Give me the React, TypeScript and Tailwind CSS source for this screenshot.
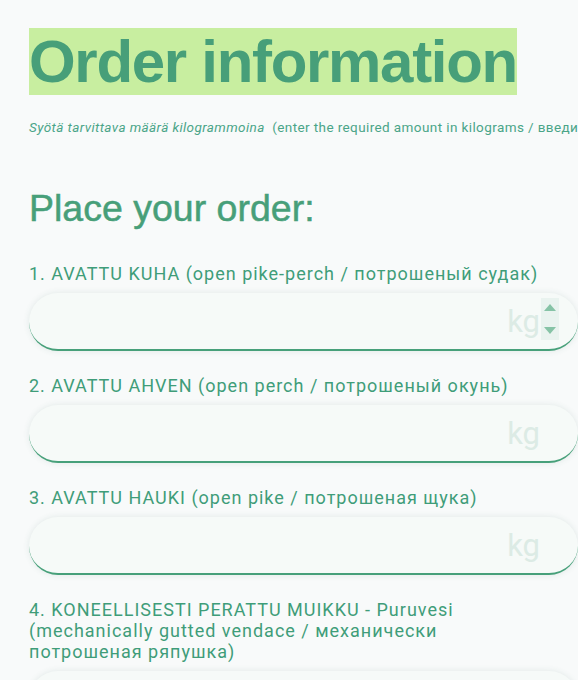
import { useState } from "react";

type Item = { id: number; label: string; spinner?: boolean };

const items: Item[] = [
  { id: 1, label: "1. AVATTU KUHA (open pike-perch / потрошеный судак)", spinner: true },
  { id: 2, label: "2. AVATTU AHVEN (open perch / потрошеный окунь)" },
  { id: 3, label: "3. AVATTU HAUKI (open pike / потрошеная щука)" },
  {
    id: 4,
    label:
      "4. KONEELLISESTI PERATTU MUIKKU - Puruvesi (mechanically gutted vendace / механически потрошеная ряпушка)",
  },
];

function Spinner() {
  return (
    <div className="pointer-events-none absolute right-[19px] top-[5px] flex h-[42px] w-[18px] flex-col items-center justify-between bg-[#e9f3ef] py-[6px]">
      <svg width="12" height="7" viewBox="0 0 12 7">
        <path d="M6 0 L12 7 L0 7 Z" fill="#86c3a6" />
      </svg>
      <svg width="12" height="7" viewBox="0 0 12 7">
        <path d="M0 0 L12 0 L6 7 Z" fill="#86c3a6" />
      </svg>
    </div>
  );
}

function QtyField({ item }: { item: Item }) {
  const [value, setValue] = useState("");
  return (
    <div className="mb-[24px]">
      <label
        htmlFor={`qty-${item.id}`}
        className="block w-[516px] text-[18px] leading-[21px] tracking-[1px] text-[#3f9d79]"
      >
        {item.label}
      </label>
      <div className="relative mt-[9px] w-[549px]">
        <input
          id={`qty-${item.id}`}
          type="text"
          inputMode="decimal"
          value={value}
          onChange={(e) => setValue(e.target.value)}
          placeholder="kg"
          className="h-[58px] w-full rounded-full border-b-2 border-[#47a07a] bg-[#f6faf8] pl-6 pr-[38px] text-right text-[31px] text-[#3f9d79] shadow-[0_0_6px_rgba(60,110,90,0.12)] outline-none placeholder:text-[#dcebe5]"
          style={{ fontFamily: "Roboto, sans-serif" }}
        />
        {item.spinner && <Spinner />}
      </div>
    </div>
  );
}

export default function App() {
  return (
    <div
      className="min-h-screen overflow-hidden bg-[#f8fafa] pl-[29px] pt-[28px]"
      style={{ fontFamily: "Roboto, 'Noto Sans', sans-serif" }}
    >
      <h1 className="inline-block bg-[#c8eea0] font-['Liberation_Sans',Arial,sans-serif] text-[60px] font-bold leading-[67px] tracking-[-1.3px] text-[#479f79]">
        Order information
      </h1>
      <p className="mt-[22px] whitespace-nowrap text-[13.5px] tracking-[0.4px] text-[#4aa588]">
        <em>Syötä tarvittava määrä kilogrammoina</em>
        &nbsp; (enter the required amount in kilograms / введите необходимое количество в килограммах)
      </p>
      <h2 className="mt-[50px] font-['Liberation_Sans',Arial,sans-serif] text-[37.5px] leading-[42px] text-[#479f79] [-webkit-text-stroke:0.5px_#479f79]">
        Place your order:
      </h2>
      <form className="mt-[34px]" onSubmit={(e) => e.preventDefault()}>
        {items.map((it) => (
          <QtyField key={it.id} item={it} />
        ))}
      </form>
    </div>
  );
}
